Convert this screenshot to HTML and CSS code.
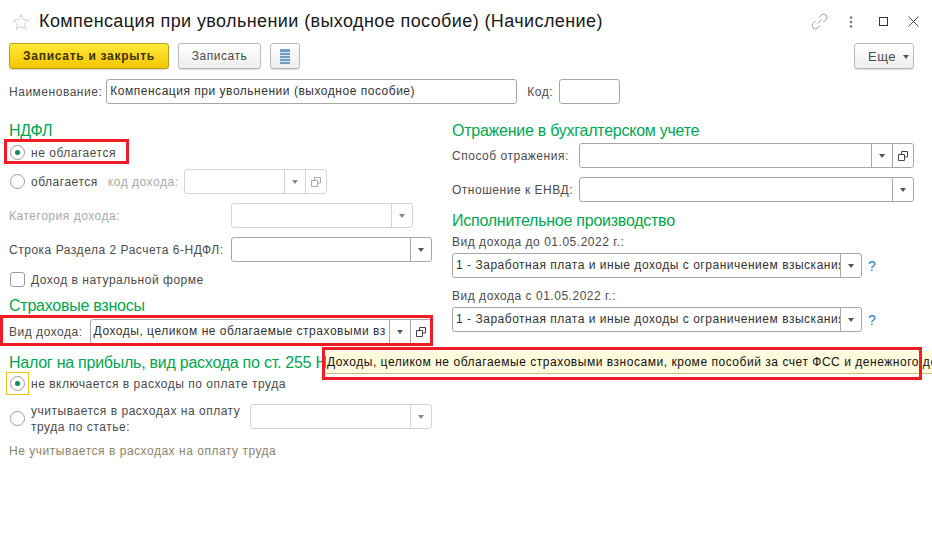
FILE: index.html
```html
<!DOCTYPE html>
<html lang="ru">
<head>
<meta charset="utf-8">
<title>Компенсация при увольнении</title>
<link rel="stylesheet" href="styles.css">
</head>
<body>
<div class="page">
  <header class="head">
    <svg class="star" width="18" height="18" viewBox="0 0 18 18"><path d="M9 1.500l2.200 5.100 5.500.5-4.200 3.600 1.300 5.400L9 13.700l-4.800 2.400 1.300-5.400L1.300 7.100l5.500-.5z" fill="none" stroke="#cfcfcf"/></svg>
    <h1 class="title">Компенсация при увольнении (выходное пособие) (Начисление)</h1>
    <div class="win">
      <svg width="17" height="17" viewBox="0 0 17 17" fill="none" stroke="#999"><path d="M6.500 10.500l4-4M8 4.500l2.500-2.500a3 3 0 0 1 4.500 4.500L12.500 9M9 12.500L6.500 15A3 3 0 0 1 2 10.500L4.500 8"/></svg>
      <svg class="dots" width="4" height="12" viewBox="0 0 4 12" fill="#777"><circle cx="2" cy="1.500" r="1.300"/><circle cx="2" cy="6" r="1.300"/><circle cx="2" cy="10.500" r="1.300"/></svg>
      <svg width="9" height="9" viewBox="0 0 9 9" fill="none" stroke="#333"><rect x=".5" y=".5" width="8" height="8"/></svg>
      <svg width="11" height="11" viewBox="0 0 11 11" fill="none" stroke="#444"><path d="M.5.500l10 10M10.500.500l-10 10"/></svg>
    </div>
  </header>

  <div class="toolbar">
    <button class="btn primary">Записать и закрыть</button>
    <button class="btn">Записать</button>
    <button class="btn icon"><svg width="10" height="15" viewBox="0 0 10 15"><rect width="10" height="15" rx="1" fill="#6f9cc4"/><path d="M0 3.500h10M0 6.500h10M0 9.500h10M0 12.500h10" stroke="#dbe7f1"/></svg></button>
    <button class="btn more">Еще<span class="caret dark"></span></button>
  </div>

  <div class="name-row">
    <label class="lab">Наименование:</label>
    <div class="field name"><span class="val">Компенсация при увольнении (выходное пособие)</span></div>
    <label class="lab code">Код:</label>
    <div class="field codef"></div>
  </div>

  <div class="cols">
    <section class="left">
      <h2 class="sec first">НДФЛ</h2>
      <div class="row r1"><span class="radio on"></span><span class="txt">не облагается</span></div>
      <div class="row r2">
        <span class="radio"></span><span class="txt">облагается</span>
        <span class="lab dim kod">код дохода:</span>
        <div class="field dis w143"><span class="val"></span><span class="cell"><i class="caret"></i></span><span class="cell"><svg class="open" width="10" height="10" viewBox="0 0 10 10" fill="none" stroke="#aaa"><path d="M3.500 3V.5h6v5.500H7M.5 3.500h6v6h-6z"/></svg></span></div>
      </div>
      <div class="row r3">
        <span class="lab dim">Категория дохода:</span>
        <div class="field dis push w182"><span class="val"></span><span class="cell"><i class="caret"></i></span></div>
      </div>
      <div class="row r4">
        <span class="lab">Строка Раздела 2 Расчета 6-НДФЛ:</span>
        <div class="field push w201"><span class="val"></span><span class="cell"><i class="caret dark"></i></span></div>
      </div>
      <div class="row r5"><span class="check"></span><span class="txt">Доход в натуральной форме</span></div>
      <h2 class="sec s2">Страховые взносы</h2>
      <div class="row r6">
        <span class="lab">Вид дохода:</span>
        <div class="field grow"><span class="val">Доходы, целиком не облагаемые страховыми вз</span><span class="cell"><i class="caret dark"></i></span><span class="cell"><svg class="open" width="10" height="10" viewBox="0 0 10 10" fill="none" stroke="#444"><path d="M3.500 3V.5h6v5.500H7M.5 3.500h6v6h-6z"/></svg></span></div>
      </div>
      <h2 class="sec s3">Налог на прибыль, вид расхода по ст. 255 НК РФ</h2>
      <div class="row r7"><span class="focus"><span class="radio on"></span></span><span class="txt">не включается в расходы по оплате труда</span></div>
      <div class="row r8">
        <span class="radio"></span><span class="txt two">учитывается в расходах на оплату<br>труда по статье:</span>
        <div class="field dis push w182"><span class="val"></span><span class="cell"><i class="caret"></i></span></div>
      </div>
      <p class="note">Не учитывается в расходах на оплату труда</p>
    </section>

    <section class="right">
      <h2 class="sec rt">Отражение в бухгалтерском учете</h2>
      <div class="row q1">
        <span class="lab">Способ отражения:</span>
        <div class="field push w335"><span class="val"></span><span class="cell"><i class="caret dark"></i></span><span class="cell"><svg class="open" width="10" height="10" viewBox="0 0 10 10" fill="none" stroke="#444"><path d="M3.500 3V.5h6v5.500H7M.5 3.500h6v6h-6z"/></svg></span></div>
      </div>
      <div class="row q2">
        <span class="lab">Отношение к ЕНВД:</span>
        <div class="field push w335"><span class="val"></span><span class="cell"><i class="caret dark"></i></span></div>
      </div>
      <h2 class="sec q3">Исполнительное производство</h2>
      <div class="lab q4">Вид дохода до 01.05.2022 г.:</div>
      <div class="row q5">
        <div class="field w410"><span class="val">1 - Заработная плата и иные доходы с ограничением взыскания</span><span class="cell"><i class="caret dark"></i></span></div>
        <span class="help">?</span>
      </div>
      <div class="lab q6">Вид дохода с 01.05.2022 г.:</div>
      <div class="row q5">
        <div class="field w410"><span class="val">1 - Заработная плата и иные доходы с ограничением взыскания</span><span class="cell"><i class="caret dark"></i></span></div>
        <span class="help">?</span>
      </div>
    </section>
  </div>

  <div class="tip">Доходы, целиком не облагаемые страховыми взносами, кроме пособий за счет ФСС и денежного довольствия</div>
  <div class="mark m1"></div>
  <div class="mark m2"></div>
  <div class="mark m3"></div>
</div>
</body>
</html>
```

FILE: styles.css
```css
* { box-sizing: border-box; }
html, body { margin: 0; padding: 0; background: #fff; }
body { font-family: "Liberation Sans", Arial, sans-serif; font-size: 12px; color: #4b4b4b; overflow: hidden; }
.page { position: relative; width: 932px; height: 538px; overflow: hidden; }

.head { display: flex; align-items: center; height: 43px; padding: 0 13px 0 12px; }
.star { flex: none; margin-right: 9px; }
.title { margin: 0; font-size: 18px; font-weight: 400; letter-spacing: .4px; color: #1a1a1a; white-space: nowrap; }
.win { margin-left: auto; display: flex; align-items: center; }
.win svg:nth-child(1) { margin-right: 21px; }
.win svg:nth-child(2) { margin-right: 26px; }
.win svg:nth-child(3) { margin-right: 20px; }

.toolbar { display: flex; align-items: stretch; height: 26px; padding: 0 18px 0 9px; }
.btn { font: inherit; letter-spacing: .5px; color: #4b4b4b; height: 26px; padding: 0; border: 1px solid #b9b9b9; border-radius: 3px; background: linear-gradient(#fff, #eee); box-shadow: 0 1px 1px rgba(0,0,0,.15); margin-right: 9px; width: 83px; }
.btn.primary { width: 160px; background: linear-gradient(#ffe93a, #f4c500); border-color: #b89d18; color: #3d3200; font-weight: 700; letter-spacing: .72px; }
.btn.icon { width: 30px; display: flex; align-items: center; justify-content: center; }
.btn.more { width: 60px; margin: 0 0 0 auto; font-size: 13px; padding-left: 13px; text-align: left; }
.caret { display: inline-block; width: 0; height: 0; border: 3.500px solid transparent; border-top: 4px solid #888; border-bottom: 0; vertical-align: middle; margin-left: 7px; }
.caret.dark { border-top-color: #555; }

.name-row { display: flex; align-items: center; height: 25px; margin-top: 10px; padding-left: 9px; }
.lab { white-space: nowrap; letter-spacing: .52px; }
.lab.dim { color: #a8a8a8; }
.field { display: flex; height: 25px; flex: none; border: 1px solid #a7a7a7; border-radius: 3px; background: #fff; color: #333; overflow: hidden; }
.field .val { flex: 1; min-width: 0; padding: 0 3px 0 3px; line-height: 23px; white-space: nowrap; overflow: hidden; letter-spacing: .52px; }
.field .cell { flex: none; width: 21px; border-left: 1px solid #a7a7a7; display: flex; align-items: center; justify-content: center; }
.field .cell .caret { margin: 0; }
.field.dis { border-color: #d4d4d4; }
.field.dis .cell { border-left-color: #d4d4d4; }
.name { width: 411px; margin-left: 4px; }
.code { margin-left: 10px; }
.codef { width: 61px; margin-left: 6px; }

.cols { display: flex; padding: 0 18px 0 9px; }
.left { width: 423px; flex: none; }
.right { width: 462px; flex: none; margin-left: 20px; }
.sec { margin: 0; font-size: 16px; font-weight: 400; letter-spacing: -.25px; color: #00a650; line-height: 18px; white-space: nowrap; }
.first { margin-top: 18px; }
.row { display: flex; align-items: center; }
.push { margin-left: auto; }
.grow { flex: 1; margin-left: 7px; }
.w143 { width: 143px; }
.w182 { width: 182px; }
.w201 { width: 201px; }
.w335 { width: 335px; }
.w410 { width: 410px; }

.radio { flex: none; position: relative; width: 15px; height: 15px; border: 1px solid #9b9b9b; border-radius: 50%; background: #fff; }
.radio.on::after { content: ""; position: absolute; left: 4px; top: 4px; width: 5px; height: 5px; border-radius: 50%; background: #0f8f4a; }
.txt { white-space: nowrap; letter-spacing: .52px; margin-left: 6px; }
.check { flex: none; width: 15px; height: 15px; border: 1px solid #9b9b9b; border-radius: 3px; background: #fff; }
.focus { flex: none; display: flex; align-items: center; justify-content: center; width: 23px; height: 23px; border: 1px solid #f2c21a; }

.r1 { height: 15px; margin-top: 5px; margin-left: 1px; }
.r2 { height: 25px; margin-top: 9px; }
.r2 .radio, .r8 .radio { margin-left: 1px; }
.r2 .kod { margin-left: 10px; }
.r2 .field { margin-left: 5px; }
.r3 { height: 25px; margin-top: 9px; width: 404px; }
.r4 { height: 25px; margin-top: 9px; }
.r5 { height: 15px; margin-top: 10px; margin-left: 1px; }
.s2 { margin-top: 10px; }
.r6 { height: 25px; margin-top: 4px; }
.s3 { margin-top: 10px; }
.r7 { height: 23px; margin-top: 0; }
.r7 .focus { margin-left: -3px; }
.r7 .txt { margin-left: 2px; }
.r8 { height: 25px; margin-top: 11px; }
.r8 .field { margin-bottom: 4px; }
.two { line-height: 16px; }
.note { margin: 13px 0 0; color: #8a8468; letter-spacing: .52px; white-space: nowrap; line-height: 15px; }

.rt { margin-top: 18px; }
.q1 { height: 25px; margin-top: 3px; }
.q2 { height: 25px; margin-top: 9px; }
.q3 { margin-top: 10px; }
.q4 { margin-top: 5px; line-height: 15px; }
.q5 { height: 25px; margin-top: 3px; }
.q6 { margin-top: 11px; line-height: 15px; }
.help { margin-left: 6px; font-size: 14px; color: #2a7fc1; }

.tip { position: absolute; left: 326px; top: 351px; height: 23px; width: 606px; padding-left: 1px; background: #fffbdc; border-bottom: 1px solid #c9bd80; color: #111; line-height: 22px; white-space: nowrap; overflow: hidden; letter-spacing: .53px; }
.mark { position: absolute; border: 3px solid #ee1c25; pointer-events: none; }
.m1 { left: 4px; top: 139px; width: 125px; height: 25px; }
.m2 { left: 0; top: 315px; width: 433px; height: 31px; }
.m3 { left: 322px; top: 347px; width: 600px; height: 33px; }
```
